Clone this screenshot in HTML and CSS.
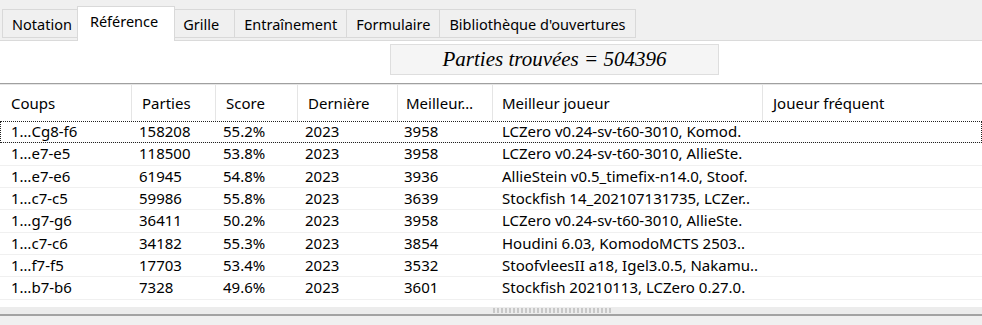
FILE: index.html
```html
<!DOCTYPE html>
<html lang="fr">
<head>
  <meta charset="UTF-8" />
  <title>Référence</title>
  <link rel="stylesheet" href="styles.css">
</head>
<body>
  <div class="tabs">
    <div class="tab">Notation</div>
    <div class="tab active">Référence</div>
    <div class="tab">Grille</div>
    <div class="tab">Entraînement</div>
    <div class="tab">Formulaire</div>
    <div class="tab">Bibliothèque d'ouvertures</div>
  </div>

  <div class="panel">
    <div class="summary">
      <div class="found">Parties trouvées = 504396</div>
    </div>

    <div class="list">
      <div class="row head">
        <div class="cell">Coups</div>
        <div class="cell">Parties</div>
        <div class="cell">Score</div>
        <div class="cell">Dernière</div>
        <div class="cell">Meilleur…</div>
        <div class="cell">Meilleur joueur</div>
        <div class="cell">Joueur fréquent</div>
      </div>
      <div class="row focus">
        <div class="cell">1…Cg8-f6</div><div class="cell">158208</div><div class="cell">55.2%</div><div class="cell">2023</div><div class="cell">3958</div><div class="cell">LCZero v0.24-sv-t60-3010, Komod.</div><div class="cell"></div>
      </div>
      <div class="row">
        <div class="cell">1…e7-e5</div><div class="cell">118500</div><div class="cell">53.8%</div><div class="cell">2023</div><div class="cell">3958</div><div class="cell">LCZero v0.24-sv-t60-3010, AllieSte.</div><div class="cell"></div>
      </div>
      <div class="row">
        <div class="cell">1…e7-e6</div><div class="cell">61945</div><div class="cell">54.8%</div><div class="cell">2023</div><div class="cell">3936</div><div class="cell">AllieStein v0.5_timefix-n14.0, Stoof.</div><div class="cell"></div>
      </div>
      <div class="row">
        <div class="cell">1…c7-c5</div><div class="cell">59986</div><div class="cell">55.8%</div><div class="cell">2023</div><div class="cell">3639</div><div class="cell">Stockfish 14_202107131735, LCZer..</div><div class="cell"></div>
      </div>
      <div class="row">
        <div class="cell">1…g7-g6</div><div class="cell">36411</div><div class="cell">50.2%</div><div class="cell">2023</div><div class="cell">3958</div><div class="cell">LCZero v0.24-sv-t60-3010, AllieSte.</div><div class="cell"></div>
      </div>
      <div class="row">
        <div class="cell">1…c7-c6</div><div class="cell">34182</div><div class="cell">55.3%</div><div class="cell">2023</div><div class="cell">3854</div><div class="cell">Houdini 6.03, KomodoMCTS 2503..</div><div class="cell"></div>
      </div>
      <div class="row">
        <div class="cell">1…f7-f5</div><div class="cell">17703</div><div class="cell">53.4%</div><div class="cell">2023</div><div class="cell">3532</div><div class="cell">StoofvleesII a18, Igel3.0.5, Nakamu..</div><div class="cell"></div>
      </div>
      <div class="row">
        <div class="cell">1…b7-b6</div><div class="cell">7328</div><div class="cell">49.6%</div><div class="cell">2023</div><div class="cell">3601</div><div class="cell">Stockfish 20210113, LCZero 0.27.0.</div><div class="cell"></div>
      </div>
    </div>

    <div class="scroll">
      <div class="grip"></div>
    </div>
  </div>
</body>
</html>
```

FILE: styles.css
```css
* {
  margin: 0;
  padding: 0;
  box-sizing: border-box;
}

body {
  background: #f0f0f0;
  font-family: "Noto Sans", "Open Sans", sans-serif;
  color: #000;
  width: 982px;
  height: 325px;
  overflow: hidden;
}

/* tab strip */
.tabs {
  display: flex;
  align-items: flex-end;
  height: 41px;
  padding-left: 2px;
  border-bottom: 1px solid #dadada;
}

.tab {
  min-width: 62px;
  height: 29px;
  padding: 4px 9px 0 9px;
  margin-right: -1px;
  margin-bottom: 2px;
  border: 1px solid #d9d9d9;
  background: #f0f0f0;
  font-size: 14.5px;
  line-height: 20px;
  white-space: nowrap;
}

.tab:first-child {
  padding-right: 8px;
}

.tab.active {
  position: relative;
  z-index: 1;
  height: 35px;
  padding: 4px 16px 0 12px;
  margin: 0 -2px -1px -3px;
  border-bottom: none;
  background: #fff;
}

/* content */
.panel {
  background: #fff;
}

.summary {
  height: 42px;
  padding: 3px 0 0 390px;
}

.found {
  width: 329px;
  height: 31px;
  background: #f5f5f5;
  border: 1px solid #dedede;
  text-align: center;
  font-family: "Liberation Serif", "Times New Roman", serif;
  font-style: italic;
  font-size: 21px;
  line-height: 28px;
}

.list {
  border-top: 1px solid #a0a0a0;
}

.row {
  display: grid;
  grid-template-columns: 132px 84px 82px 100px 95px 270px 1fr;
  height: 22.33px;
  border-bottom: 1px solid #f0f0f0;
  font-size: 15px;
  line-height: 21px;
  white-space: nowrap;
}

.row .cell {
  padding-left: 7px;
  overflow: hidden;
}

.row .cell:first-child {
  padding-left: 11px;
}

.row .cell:nth-child(5) {
  padding-left: 6px;
}

.row .cell:nth-child(6) {
  padding-left: 9px;
}

.row.head {
  height: 37px;
  border-bottom: none;
  border-top: 1px solid #e6e6e6;
  line-height: 36px;
}

.row.head .cell {
  padding-left: 10px;
  border-right: 1px solid #e5e5e5;
}

.row.head .cell:first-child {
  padding-left: 11px;
}

.row.head .cell:nth-child(5) {
  padding-left: 8px;
}

.row.head .cell:nth-child(6) {
  padding-left: 9px;
}

.row.head .cell:last-child {
  border-right: none;
}

.row.focus {
  outline: 1px dotted #222;
  outline-offset: -1px;
}

.scroll {
  height: 16px;
  padding-top: 7px;
  border-bottom: 2px solid #a3a3a3;
  display: flex;
  justify-content: center;
  background: linear-gradient(#fff 0, #fff 7px, #ececec 7px);
}

.grip {
  width: 120px;
  height: 5px;
  margin-left: 124px;
  margin-top: 1px;
  background: repeating-linear-gradient(90deg, #c8c8c8 0 2px, transparent 2px 4px);
}
```
